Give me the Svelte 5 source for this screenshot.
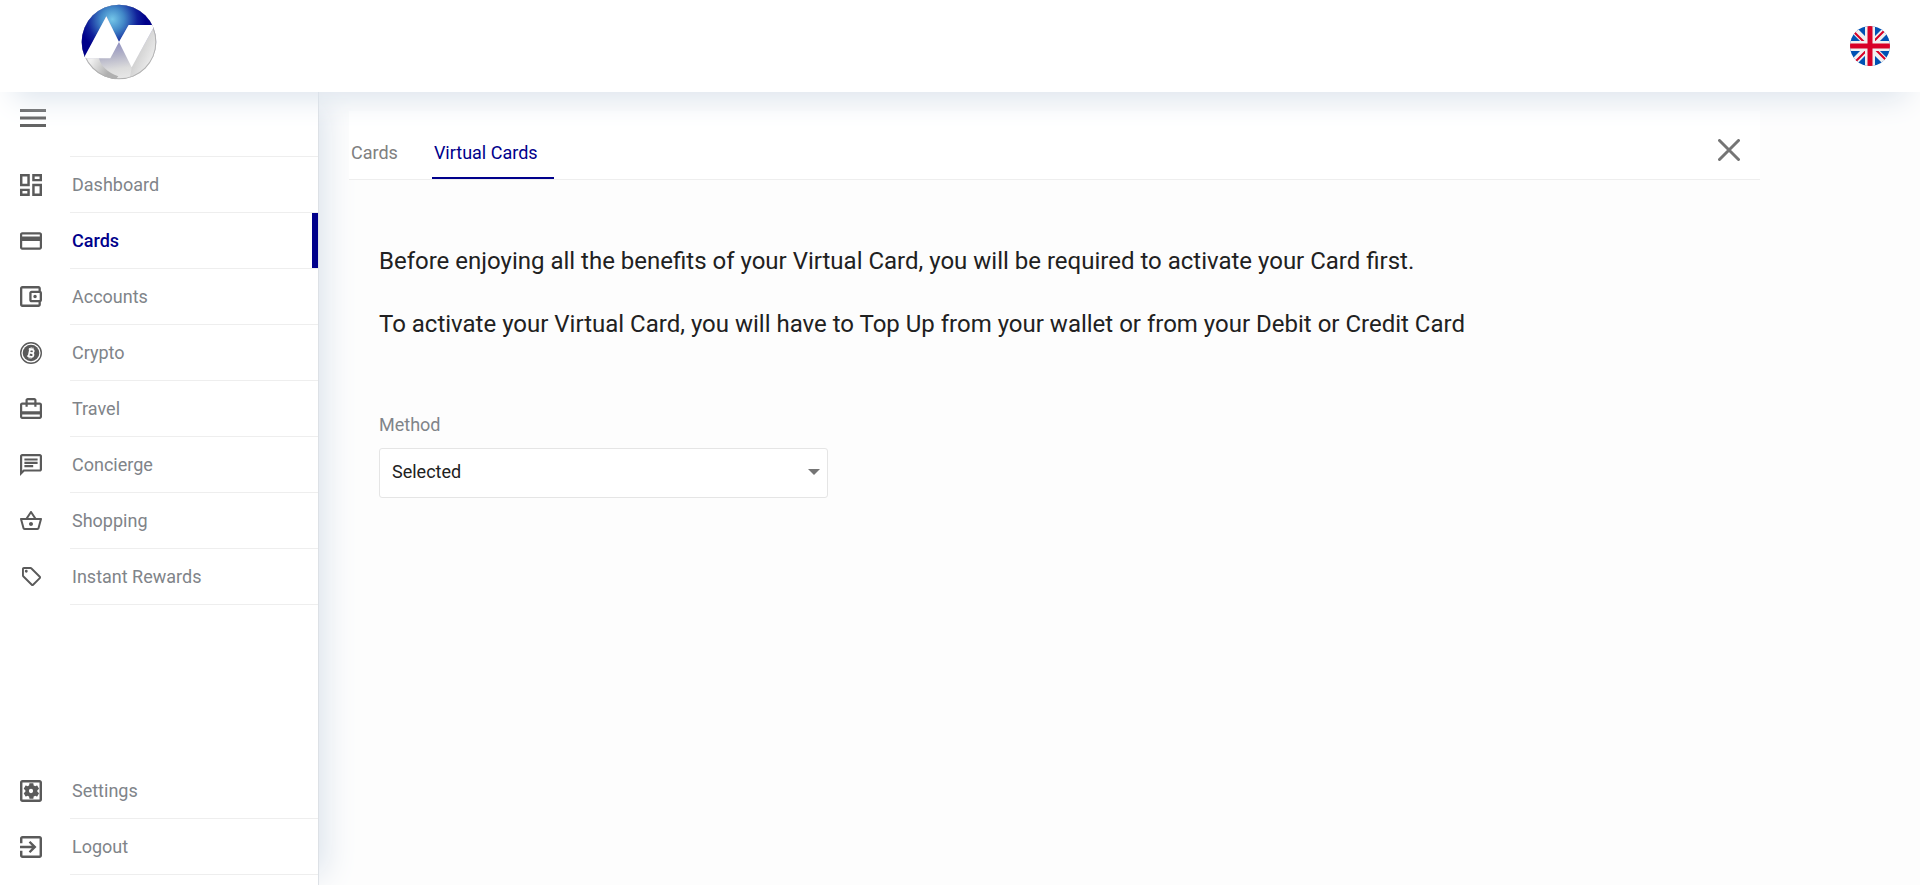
<script>
  const navItems = [
    {
      label: 'Dashboard', box: '3 3 18 18', w: 22, h: 22,
      d: 'M19 5v2h-4V5h4M9 5v6H5V5h4m10 8v6h-4v-6h4M9 17v2H5v-2h4M21 3h-8v6h8V3zM11 3H3v10h8V3zm10 8h-8v10h8V11zm-10 4H3v6h8v-6z'
    },
    {
      label: 'Cards', box: '2 4 20 16', w: 22, h: 18,
      d: 'M20 4H4c-1.11 0-2 .89-2 2v12c0 1.11.89 2 2 2h16c1.11 0 2-.89 2-2V6c0-1.11-.89-2-2-2zm0 14H4v-6h16v6zm0-10H4V6h16v2z'
    },
    {
      label: 'Accounts', box: '3 3 19 18', w: 22, h: 21,
      d: 'M21 7.28V5c0-1.1-.9-2-2-2H5c-1.11 0-2 .9-2 2v14c0 1.1.89 2 2 2h14c1.1 0 2-.9 2-2v-2.28c.59-.35 1-.98 1-1.72V9c0-.74-.41-1.37-1-1.72zM20 9v6h-7V9h7zM5 19V5h14v2h-6c-1.1 0-2 .9-2 2v6c0 1.1.9 2 2 2h6v2H5zM14.5 12a1.5 1.5 0 1 0 3 0a1.5 1.5 0 1 0-3 0z'
    },
    { label: 'Crypto', coin: true },
    {
      label: 'Travel', box: '2 2 20 19', w: 22, h: 21,
      d: 'M20 6h-3V4c0-1.11-.89-2-2-2H9c-1.11 0-2 .89-2 2v2H4c-1.11 0-2 .89-2 2v11c0 1.11.89 2 2 2h16c1.11 0 2-.89 2-2V8c0-1.11-.89-2-2-2zM9 4h6v2H9V4zm11 15H4v-2h16v2zm0-5H4V8h3v2h2V8h6v2h2V8h3v6z'
    },
    {
      label: 'Concierge', box: '2 2 20 20', w: 22, h: 22,
      d: 'M4 4h16v12H5.17L4 17.17V4m0-2c-1.1 0-1.99.9-1.99 2L2 22l4-4h14c1.1 0 2-.9 2-2V4c0-1.1-.9-2-2-2H4zm2 10h8v2H6v-2zm0-3h12v2H6V9zm0-3h12v2H6V6z'
    },
    {
      label: 'Shopping', box: '1 2 22 19', w: 22, h: 19,
      d: 'M22 9h-4.79l-4.38-6.56c-.19-.28-.51-.42-.83-.42s-.64.14-.83.43L6.79 9H2c-.55 0-1 .45-1 1 0 .09.01.18.04.27l2.54 9.27c.23.84 1 1.46 1.92 1.46h13c.92 0 1.69-.62 1.93-1.46l2.54-9.27L23 10c0-.55-.45-1-1-1zM12 4.8L14.8 9H9.2L12 4.8zM18.5 19l-12.99.01L3.31 11H20.7l-2.2 8zM12 13c-1.1 0-2 .9-2 2s.9 2 2 2 2-.9 2-2-.9-2-2-2z'
    },
    {
      label: 'Instant Rewards', box: '2 2 20 20', w: 19, h: 19,
      d: 'M21.41 11.58l-9-9C12.05 2.22 11.55 2 11 2H4c-1.1 0-2 .9-2 2v7c0 .55.22 1.05.59 1.42l9 9c.36.36.86.58 1.41.58s1.05-.22 1.41-.59l7-7c.37-.36.59-.86.59-1.41s-.23-1.06-.59-1.42zM13 20.01L4 11V4h7v-.01l9 9-7 7.02zM5 6.5a1.5 1.5 0 1 0 3 0a1.5 1.5 0 1 0-3 0z'
    }
  ];

  const footerItems = [
    {
      label: 'Settings', box: '3 3 18 18', w: 22, h: 22,
      d: 'M19 3H5c-1.1 0-2 .9-2 2v14c0 1.1.9 2 2 2h14c1.1 0 2-.9 2-2V5c0-1.1-.9-2-2-2zM19 19H5V5h14v14zM17.250 12c0-.23-.02-.46-.05-.68l1.200-.9c.13-.11.17-.3.08-.45l-1.300-2.260c-.09-.15-.27-.21-.43-.15l-1.400.56c-.36-.28-.76-.51-1.180-.69l-.22-1.500c-.02-.17-.17-.3-.34-.3h-2.600c-.17 0-.32.13-.34.3l-.22 1.500c-.42.18-.82.41-1.180.69l-1.400-.56c-.16-.06-.34 0-.43.15l-1.300 2.260c-.09.15-.05.34.08.45l1.200.9c-.03.22-.05.45-.05.68s.02.46.05.68l-1.200.9c-.13.11-.17.3-.08.45l1.300 2.260c.09.15.27.21.43.15l1.400-.56c.36.28.76.51 1.180.69l.22 1.500c.02.17.17.3.34.3h2.600c.17 0 .32-.13.34-.3l.22-1.500c.42-.18.82-.41 1.180-.69l1.400.56c.16.06.34 0 .43-.15l1.300-2.260c.09-.15.05-.34-.08-.45l-1.200-.9c.03-.22.05-.45.05-.68zM10.250 12a1.750 1.750 0 1 0 3.500 0a1.750 1.750 0 1 0-3.500 0z'
    },
    {
      label: 'Logout', box: '3 3 18 18', w: 22, h: 22,
      d: 'M10.09 15.59L11.5 17l5-5-5-5-1.41 1.41L12.67 11H3v2h9.67l-2.58 2.59zM19 3H5c-1.11 0-2 .9-2 2v4h2V5h14v14H5v-4H3v4c0 1.1.89 2 2 2h14c1.1 0 2-.9 2-2V5c0-1.1-.9-2-2-2z'
    }
  ];

  let active = $state('Cards');
  let tab = $state('Virtual Cards');
  let method = $state('Selected');
</script>

{#snippet row(item)}
  <li>
    <a class="nav-link" class:active={active === item.label} href="#top" onclick={() => (active = item.label)}>
      <span class="nav-icon">
        {#if item.coin}
          <svg width="22" height="22" viewBox="0 0 22 22" aria-hidden="true">
            <circle cx="11" cy="11" r="10.3" fill="none" stroke="currentColor" stroke-width="1.4" />
            <circle cx="11" cy="11" r="8.3" fill="currentColor" />
            <g transform="rotate(12 11 11)" fill="none" stroke="#fff">
              <path stroke-width="1.7" d="M8 7.400h3.600a1.700 1.700 0 0 1 0 3.500h-2.400h2.800a1.800 1.800 0 0 1 0 3.700H8M9.300 7.400v7.200" />
              <path stroke-width="1.100" d="M10.100 5.400v2M12 5.400v2M10.100 14.600v2M12 14.600v2" />
            </g>
          </svg>
        {:else}
          <svg width={item.w} height={item.h} viewBox={item.box} aria-hidden="true">
            <path fill="currentColor" fill-rule="evenodd" d={item.d} />
          </svg>
        {/if}
      </span>
      <span class="nav-label">{item.label}</span>
    </a>
  </li>
{/snippet}

<div class="page" id="top">
  <header>
    <a class="logo" href="#top" aria-label="Home">
      <svg width="76" height="76" viewBox="0 0 228 228" aria-hidden="true">
        <defs>
          <radialGradient id="blue" gradientUnits="userSpaceOnUse" cx="94" cy="46" r="100">
            <stop offset="0" stop-color="#74c6e8" />
            <stop offset="0.35" stop-color="#4288c8" />
            <stop offset="0.75" stop-color="#10209a" />
            <stop offset="1" stop-color="#00008a" />
          </radialGradient>
          <linearGradient id="silver" gradientUnits="userSpaceOnUse" x1="114" y1="114" x2="130" y2="226">
            <stop offset="0" stop-color="#8f8fc0" />
            <stop offset="0.35" stop-color="#b4b4c8" />
            <stop offset="0.7" stop-color="#dcdcdc" />
            <stop offset="1" stop-color="#e8e8e8" />
          </linearGradient>
          <linearGradient id="shade" gradientUnits="userSpaceOnUse" x1="30" y1="170" x2="84" y2="200">
            <stop offset="0" stop-color="#f0f0f0" />
            <stop offset="1" stop-color="#b0b0b0" />
          </linearGradient>
          <linearGradient id="edge" gradientUnits="userSpaceOnUse" x1="160" y1="130" x2="226" y2="160">
            <stop offset="0" stop-color="#c8c8c8" />
            <stop offset="1" stop-color="#f0f0f0" />
          </linearGradient>
          <clipPath id="ball"><circle cx="114" cy="114" r="112" /></clipPath>
        </defs>
        <g clip-path="url(#ball)">
          <rect width="228" height="228" fill="url(#silver)" />
          <path fill="url(#edge)" d="M222 63L152 190L146 228H228V63z" />
          <path fill="url(#shade)" d="M8 163h46c6 24 26 42 58 54l-10 11C50 222 14 200 8 163z" />
          <circle cx="114" cy="114" r="111" fill="none" stroke="#b0b0b0" stroke-width="4" />
          <path fill="url(#blue)" d="M0 163H10L76 37L114 114L143 63H228V0H0z" />
          <path fill="#fff" d="M8 163L76 37L114 114L88 163z" />
          <path fill="#fff" d="M143 63H222L152 190L114 114z" />
        </g>
      </svg>
    </a>
    <button class="flag" type="button" aria-label="English">
      <svg width="40" height="40" viewBox="0 0 40 40" aria-hidden="true">
        <defs><clipPath id="round"><circle cx="20" cy="20" r="20" /></clipPath></defs>
        <g clip-path="url(#round)">
          <rect width="40" height="40" fill="#0052b4" />
          <path stroke="#f0f0f0" stroke-width="7" d="M0 0L40 40M40 0L0 40" />
          <path stroke="#d80027" stroke-width="2" d="M4 6L17 19M6 35L17 24M34 5L23 16M36 34L23 21" />
          <path stroke="#f0f0f0" stroke-width="10" d="M20 0V40M0 20H40" />
          <path stroke="#d80027" stroke-width="5" d="M20 0V40M0 20H40" />
        </g>
      </svg>
    </button>
  </header>

  <div class="body">
    <nav class="sidebar" aria-label="Main">
      <div class="menu-row">
        <button class="menu" type="button" aria-label="Toggle menu">
          <svg width="26" height="18" viewBox="0 0 26 18" aria-hidden="true">
            <path fill="currentColor" d="M0 0h26v3H0zM0 7.500h26v3H0zM0 15h26v3H0z" />
          </svg>
        </button>
      </div>
      <ul>
        {#each navItems as item}{@render row(item)}{/each}
      </ul>
      <ul class="bottom">
        {#each footerItems as item}{@render row(item)}{/each}
      </ul>
    </nav>

    <main>
      <div class="tabs">
        <div class="tab-list" role="tablist">
          {#each ['Cards', 'Virtual Cards'] as name}
            <button class="tab" class:current={tab === name} type="button" role="tab" aria-selected={tab === name} onclick={() => (tab = name)}>{name}</button>
          {/each}
        </div>
        <button class="close" type="button" aria-label="Close">
          <svg width="22" height="22" viewBox="0 0 22 22" aria-hidden="true">
            <path stroke="currentColor" stroke-width="3" stroke-linecap="round" d="M1.500 1.500L20.500 20.500M20.500 1.500L1.500 20.500" />
          </svg>
        </button>
      </div>

      <section>
        <p>Before enjoying all the benefits of your Virtual Card, you will be required to activate your Card first.</p>
        <p>To activate your Virtual Card, you will have to Top Up from your wallet or from your Debit or Credit Card</p>
        <div class="field">
          <label for="method">Method</label>
          <div class="select">
            <select id="method" bind:value={method}>
              <option>Selected</option>
            </select>
            <svg width="12" height="6" viewBox="0 0 12 6" aria-hidden="true"><path fill="#757575" d="M0 0h12L6 6z" /></svg>
          </div>
        </div>
      </section>
    </main>
  </div>
</div>

<style>
  :global(body) {
    margin: 0;
    background: #fdfdfd;
  }

  .page {
    min-height: 100vh;
    display: flex;
    flex-direction: column;
    font-family: Roboto, "Liberation Sans", sans-serif;
    font-size: 18px;
    line-height: 24px;
    color: #212121;
  }

  button {
    padding: 0;
    border: 0;
    background: none;
    font: inherit;
    cursor: pointer;
  }

  svg {
    display: block;
  }

  header {
    position: relative;
    z-index: 2;
    box-sizing: border-box;
    height: 92px;
    padding: 4px 30px 0 81px;
    display: flex;
    justify-content: space-between;
    align-items: flex-start;
    background: #fff;
    box-shadow: 0 20px 30px -14px #dbe3ec;
  }

  .flag {
    margin-top: 22px;
  }

  .body {
    flex: 1;
    display: flex;
  }

  .sidebar {
    flex: none;
    box-sizing: border-box;
    width: 319px;
    padding-bottom: 10px;
    display: flex;
    flex-direction: column;
    background: #fff;
    border-right: 1px solid #dde1e6;
    box-shadow: 16px 0 30px -10px #dbe3ec;
  }

  .menu-row {
    box-sizing: border-box;
    height: 65px;
    padding: 17px 20px 0;
    background: linear-gradient(#eee, #eee) 70px 100% / 100% 1px no-repeat;
  }

  .menu {
    color: #616161;
  }

  ul {
    margin: 0;
    padding: 0;
    list-style: none;
  }

  .bottom {
    margin-top: auto;
  }

  .nav-link {
    height: 56px;
    display: flex;
    align-items: stretch;
    color: #808489;
    text-decoration: none;
  }

  .nav-icon {
    width: 22px;
    padding: 0 28px 1px 20px;
    display: flex;
    align-items: center;
    justify-content: center;
    color: #5a5a5a;
  }

  .nav-label {
    flex: 1;
    padding: 1px 2px 0;
    display: flex;
    align-items: center;
    border-bottom: 1px solid #eee;
  }

  .active {
    box-shadow: inset -6px 0 #00008b;
    color: #00008b;
    font-weight: 500;
  }

  main {
    flex: 1;
    min-width: 0;
    padding: 19px 160px 40px 30px;
  }

  .tabs {
    position: relative;
    display: flex;
    justify-content: space-between;
    align-items: center;
    height: 68px;
    padding-right: 20px;
    background: #fff;
    border-bottom: 1px solid #eee;
  }

  .tab-list {
    align-self: stretch;
    display: flex;
    gap: 18px;
  }

  .tab {
    padding: 18px 16px 0 2px;
    border-bottom: 2px solid transparent;
    color: #808080;
  }

  .current {
    border-color: #00008b;
    color: #00008b;
  }

  .close {
    margin-top: 10px;
    color: #757575;
  }

  section {
    padding: 65px 30px 0;
  }

  p {
    margin: 0 0 31px;
    font-size: 24px;
    line-height: 32px;
  }

  .field {
    max-width: 449px;
    padding-top: 42px;
  }

  label {
    display: block;
    margin-bottom: 11px;
    color: #808489;
  }

  .select {
    display: grid;
    align-items: center;
  }

  .select > * {
    grid-area: 1 / 1;
  }

  .select svg {
    justify-self: end;
    margin: 0 8px 2px 0;
    pointer-events: none;
  }

  select {
    appearance: none;
    box-sizing: border-box;
    width: 100%;
    height: 50px;
    padding: 0 30px 2px 12px;
    border: 1px solid #e5e5e5;
    border-radius: 3px;
    background: #fff;
    color: #212121;
    font: inherit;
  }
</style>
